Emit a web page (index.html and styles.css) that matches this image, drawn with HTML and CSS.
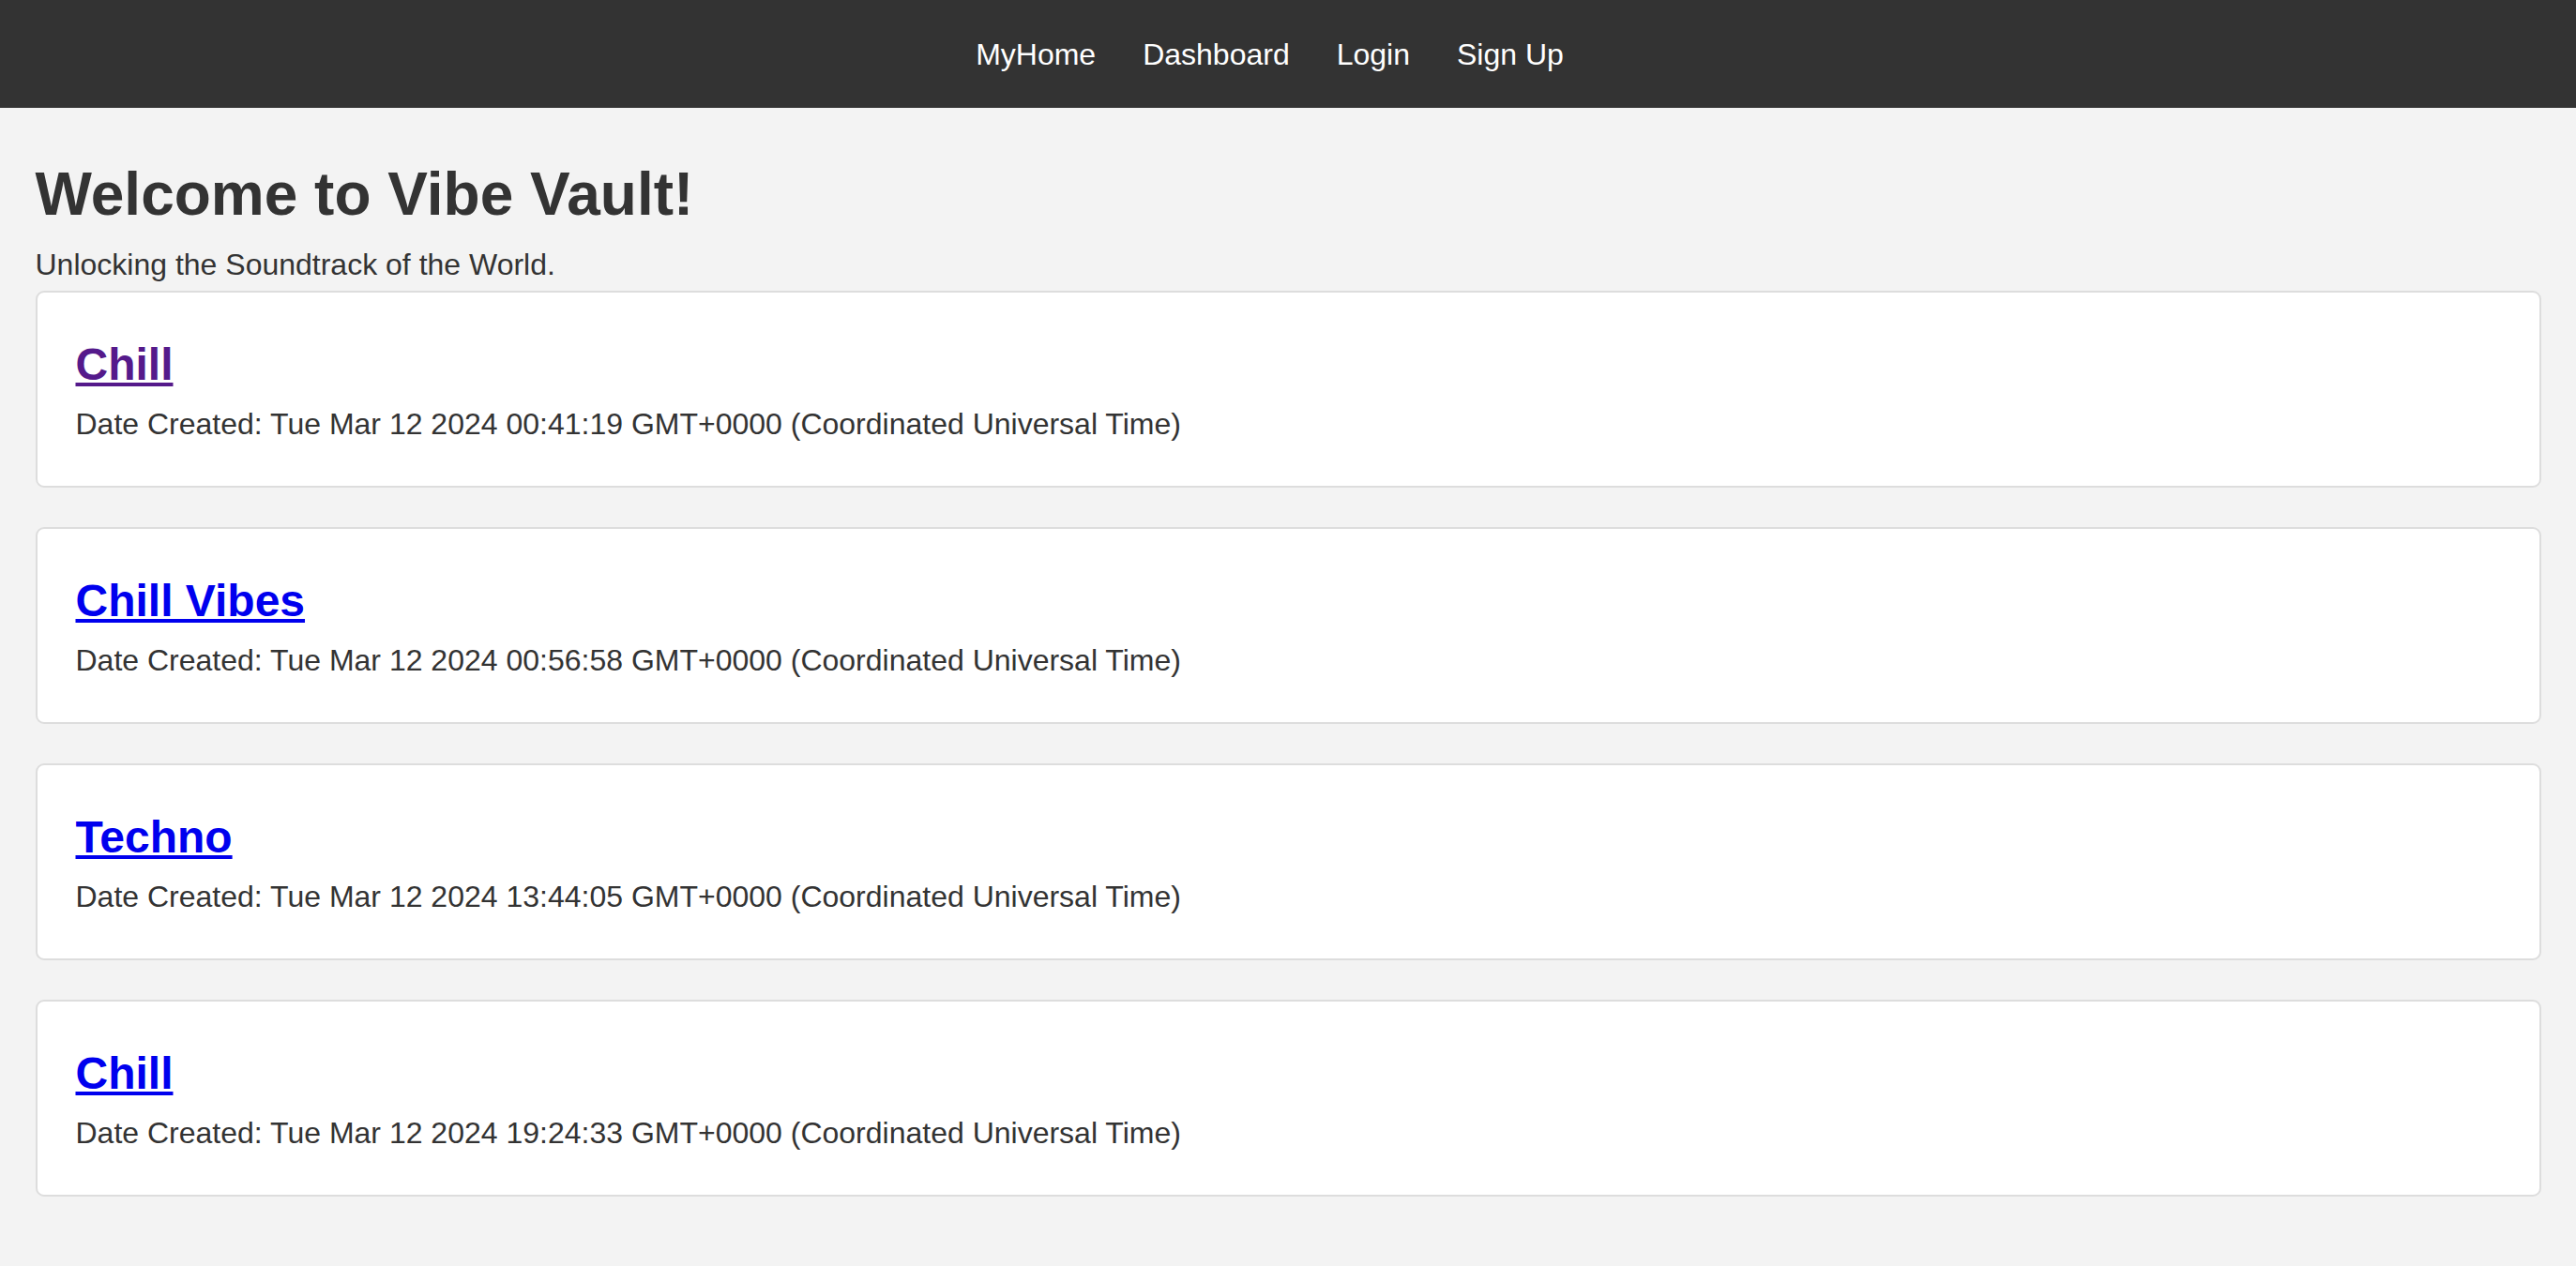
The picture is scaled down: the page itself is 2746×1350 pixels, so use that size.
FILE: index.html
```html
<!DOCTYPE html>
<html lang="en">
<head>
<meta charset="utf-8">
<title>Vibe Vault</title>
<link rel="stylesheet" href="styles.css">
</head>
<body>
<nav class="topnav">
  <a href="#">MyHome</a>
  <a href="#">Dashboard</a>
  <a href="#">Login</a>
  <a href="#">Sign Up</a>
</nav>
<main class="page">
  <h1 class="title">Welcome to Vibe Vault!</h1>
  <p class="tagline">Unlocking the Soundtrack of the World.</p>
  <div class="playlists">
    <article class="card">
      <h2 class="card-title"><a class="card-link visited" href="#">Chill</a></h2>
      <p class="card-date">Date Created: Tue Mar 12 2024 00:41:19 GMT+0000 (Coordinated Universal Time)</p>
    </article>
    <article class="card">
      <h2 class="card-title"><a class="card-link" href="#">Chill Vibes</a></h2>
      <p class="card-date">Date Created: Tue Mar 12 2024 00:56:58 GMT+0000 (Coordinated Universal Time)</p>
    </article>
    <article class="card">
      <h2 class="card-title"><a class="card-link" href="#">Techno</a></h2>
      <p class="card-date">Date Created: Tue Mar 12 2024 13:44:05 GMT+0000 (Coordinated Universal Time)</p>
    </article>
    <article class="card">
      <h2 class="card-title"><a class="card-link" href="#">Chill</a></h2>
      <p class="card-date">Date Created: Tue Mar 12 2024 19:24:33 GMT+0000 (Coordinated Universal Time)</p>
    </article>
  </div>
</main>
</body>
</html>
```

FILE: styles.css
```css
html, body {
  margin: 0;
  padding: 0;
}

body {
  background: #f3f3f3;
  color: #333;
  font-family: "Liberation Sans", Arial, Helvetica, sans-serif;
  font-size: 32px;
}

.topnav {
  background: #333;
  display: flex;
  justify-content: center;
  gap: 50px;
  padding: 39.5px 39px 39.5px 0;
}

.topnav a {
  color: #fff;
  text-decoration: none;
  font-size: 32px;
  line-height: 36px;
}

.page {
  padding: 55.5px 37.5px 40px;
}

.title {
  margin: 0;
  font-size: 64px;
  font-weight: bold;
  line-height: 73px;
}

.tagline {
  margin: 20.8px 0 8.6px;
  font-size: 32px;
  line-height: 37px;
}

.playlists {
  display: flex;
  flex-direction: column;
  gap: 42px;
}

.card {
  background: #fff;
  border: 2px solid #ddd;
  border-radius: 9px;
  padding: 48.9px 41px 46.6px;
}

.card-title {
  margin: 0 0 18.5px;
  font-size: 48px;
  font-weight: bold;
  line-height: 55px;
}

.card-link {
  color: #0000ee;
  text-decoration: underline;
}

.card-link.visited {
  color: #551a8b;
}

.card-date {
  margin: 0;
  font-size: 32px;
  line-height: 37px;
}
```
